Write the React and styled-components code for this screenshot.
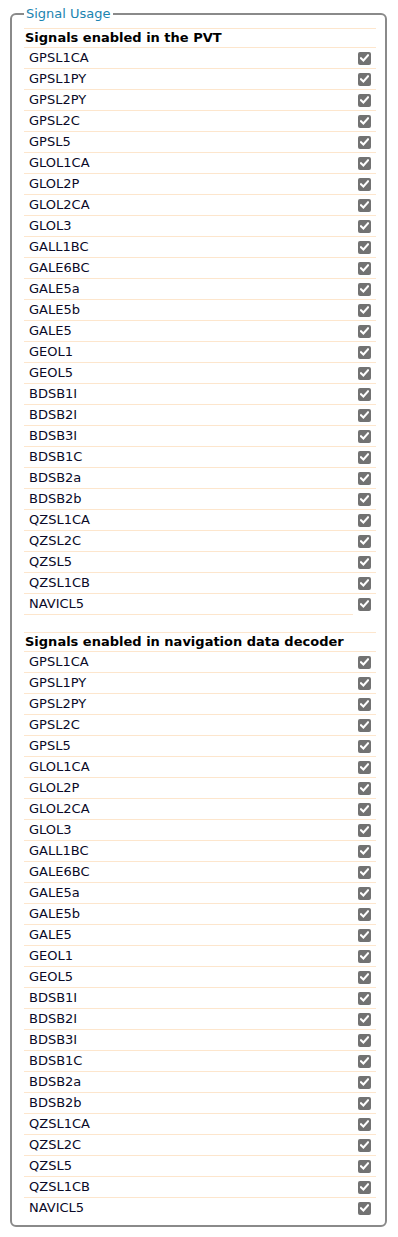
import React from "react";
import styled, { createGlobalStyle } from "styled-components";

const Global = createGlobalStyle`
  html, body { margin: 0; padding: 0; background: #ffffff; }
  body { font-family: "DejaVu Sans", Verdana, sans-serif; }
`;

const Page = styled.div`
  padding: 6px 11px 10px 10px;
`;

const Fieldset = styled.fieldset`
  margin: 0;
  border: 2px solid #8a8a8a;
  border-radius: 6px;
  padding: 6px 9px 7px 12px;
  min-width: 0;
`;

const Legend = styled.legend`
  margin-left: 0;
  padding: 0 2px;
  font-size: 13px;
  line-height: 16px;
  color: #1b84b0;
`;

const Section = styled.div`
  display: flex;
  flex-direction: column;
`;

const Header = styled.div`
  border-top: 1px solid #fde6cd;
  height: 18px;
  line-height: 18px;
  font-size: 13px;
  font-weight: bold;
  color: #000;
  padding-left: 1px;
  white-space: nowrap;
`;

const Row = styled.div`
  display: flex;
  height: 21px;
`;

const Label = styled.div`
  flex: 1;
  border-top: 1px solid #fde6cd;
  font-size: 13px;
  line-height: 20px;
  padding-left: 5px;
  color: #0a0a28;
  white-space: nowrap;
`;

const CheckCell = styled.div`
  width: 24px;
  border-top: ${(p) => (p.$line ? "1px solid #fde6cd" : "1px solid transparent")};
  display: flex;
  align-items: center;
  justify-content: flex-start;
  padding-left: 6px;
  box-sizing: border-box;
`;

const Box = styled.span`
  width: 13px;
  height: 13px;
  border-radius: 2px;
  background: #727272;
  display: flex;
  align-items: center;
  justify-content: center;
`;

const EndLine = styled.div`
  border-top: 1px solid #fde6cd;
  margin-right: 23px;
  height: 0;
`;

const Gap = styled.div`
  height: 17px;
`;

const signals = [
  "GPSL1CA", "GPSL1PY", "GPSL2PY", "GPSL2C", "GPSL5", "GLOL1CA", "GLOL2P",
  "GLOL2CA", "GLOL3", "GALL1BC", "GALE6BC", "GALE5a", "GALE5b", "GALE5",
  "GEOL1", "GEOL5", "BDSB1I", "BDSB2I", "BDSB3I", "BDSB1C", "BDSB2a",
  "BDSB2b", "QZSL1CA", "QZSL2C", "QZSL5", "QZSL1CB", "NAVICL5",
];

function Check() {
  return (
    <Box>
      <svg width="9" height="8" viewBox="0 0 9 8">
        <path d="M1 4.2 L3.4 6.5 L8 1.3" fill="none" stroke="#fff" strokeWidth="2" strokeLinecap="square" />
      </svg>
    </Box>
  );
}

function SignalList({ title }) {
  return (
    <Section>
      <Header>{title}</Header>
      {signals.map((s) => (
        <Row key={s}>
          <Label>{s}</Label>
          <CheckCell $line>
            <Check />
          </CheckCell>
        </Row>
      ))}
    </Section>
  );
}

export default function App() {
  return (
    <>
      <Global />
      <Page>
        <Fieldset>
          <Legend>Signal Usage</Legend>
          <SignalList title="Signals enabled in the PVT" />
          <EndLine />
          <Gap />
          <SignalList title="Signals enabled in navigation data decoder" />
        </Fieldset>
      </Page>
    </>
  );
}
